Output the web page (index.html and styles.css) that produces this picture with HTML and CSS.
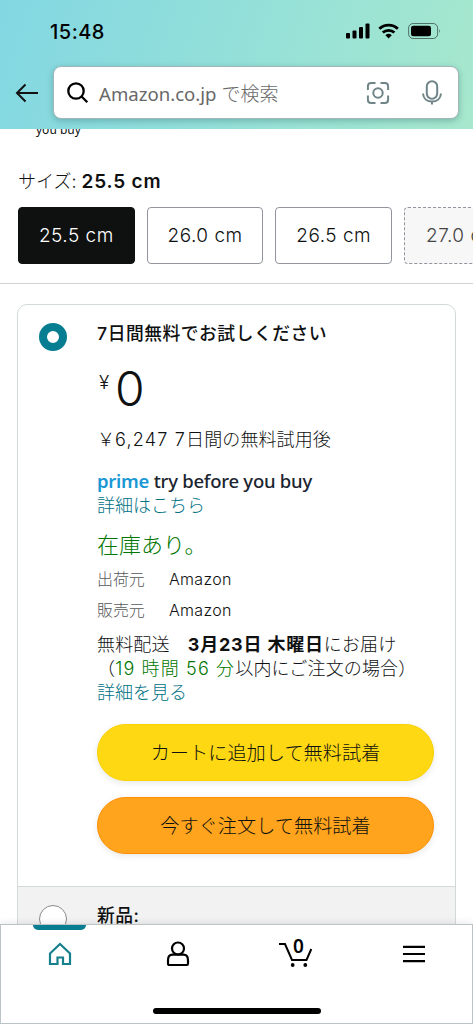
FILE: index.html
```html
<!DOCTYPE html>
<html lang="ja">
<head>
<meta charset="utf-8">
<title>Amazon.co.jp</title>
<link rel="stylesheet" href="styles.css">
</head>
<body>
<div class="screen">
  <header class="header">
    <div class="status">
      <span class="time">15:48</span>
      <svg class="status-icons" width="96" height="18" viewBox="0 0 96 18">
        <rect x="1" y="11" width="4" height="5.500" rx="1"/><rect x="7.500" y="8.500" width="4" height="8" rx="1"/><rect x="14" y="5" width="4" height="11.500" rx="1"/><rect x="20.500" y="1.500" width="4" height="15" rx="1"/>
        <g fill="none" stroke="#000" stroke-width="2.700"><path d="M34.300 6.800a13.500 13.500 0 0 1 18.600 0M37.800 10.600a8.500 8.500 0 0 1 11.600 0"/></g>
        <path d="M40.400 13.200a5 5 0 0 1 6.400 0l-3.200 3.300z"/>
        <rect x="63.600" y="1.500" width="29" height="15" rx="4.500" fill="none" stroke="#000" stroke-opacity=".5"/>
        <rect x="66" y="3.700" width="20" height="10.600" rx="2.300"/><path d="M94.300 7q1.600 2 0 4z" opacity=".6"/>
      </svg>
    </div>
    <div class="search-row">
      <svg class="back" width="24" height="20" viewBox="0 0 24 20" fill="none" stroke="#111" stroke-width="2"><path d="M23 10H2M10.500 1.500 2 10l8.500 8.500"/></svg>
      <div class="search">
        <svg class="lens" width="22" height="22" viewBox="0 0 22 22" fill="none" stroke="#000" stroke-width="2.300"><circle cx="9" cy="9" r="7.700"/><path d="m14.300 14.300 6 6"/></svg>
        <span class="placeholder">Amazon.co.jp <span class="kana">で検索</span></span>
        <svg class="scan" width="24" height="24" viewBox="0 0 24 24" fill="none" stroke="#6f8587" stroke-width="2"><path d="M9.500 1.900H5.200Q1.900 1.900 1.900 5.200V9M14.500 1.900h4.300q3.300 0 3.300 3.300V9M1.900 14.500v4.300q0 3.300 3.300 3.300h4.300M22.100 14.500v4.300q0 3.300-3.300 3.300h-4.300"/><circle cx="12" cy="12" r="4.700"/></svg>
        <svg class="mic" width="20" height="25" viewBox="0 0 20 25" fill="none" stroke="#6f8587" stroke-width="2"><rect x="4.800" y="1.300" width="10.400" height="17.400" rx="5.200"/><path d="M1 13.500c.4 5 4 8 9 8s8.600-3 9-8M10 21.500v3"/></svg>
      </div>
    </div>
  </header>

  <main class="content">
    <div class="clipped">you buy</div>
    <section class="sizes">
      <h2 class="size-label">サイズ: <b>25.5 cm</b></h2>
      <div class="chips">
        <div class="chip selected">25.5 cm</div>
        <div class="chip">26.0 cm</div>
        <div class="chip">26.5 cm</div>
        <div class="chip unavailable">27.0 cm</div>
      </div>
    </section>
    <section class="card">
      <div class="offer">
        <span class="radio on"></span>
        <div class="details">
          <h3 class="title">7日間無料でお試しください</h3>
          <div class="price"><span class="yen">¥</span><span class="zero">0</span></div>
          <p class="after"><span class="yen-wide">￥</span><span class="amount">6,247 7</span>日間の無料試用後</p>
          <p class="tbyb"><b>prime</b> try before you buy</p>
          <p class="link">詳細はこちら</p>
          <p class="stock">在庫あり。</p>
          <dl class="facts">
            <dt>出荷元</dt><dd>Amazon</dd>
            <dt>販売元</dt><dd>Amazon</dd>
          </dl>
          <p class="delivery">無料配送　<b>3月23日 木曜日</b>にお届け</p>
          <p class="delivery countdown">（<span class="green">19 時間 56 分</span>以内にご注文の場合）</p>
          <p class="link">詳細を見る</p>
          <div class="btn cart">カートに追加して無料試着</div>
          <div class="btn buy">今すぐ注文して無料試着</div>
        </div>
      </div>
      <div class="offer fresh">
        <span class="radio"></span>
        <h3 class="title">新品:</h3>
      </div>
    </section>
  </main>

  <nav class="tabs">
    <div class="tab active"><svg width="24" height="24" viewBox="0 0 24 24" fill="none" stroke="#16808f" stroke-width="2.200"><path d="M2 11.500 12 2l10 9.500V22h-7v-6.500H9.500V22H2z"/></svg></div>
    <div class="tab"><svg width="24" height="26" viewBox="0 0 24 26" fill="none" stroke="#000" stroke-width="2.200"><circle cx="12" cy="7.500" r="6"/><path d="M6.500 13.700h11c3 0 4.500 2.500 4.500 5.500v3.500q0 1.300-1.300 1.300H3.300Q2 24 2 22.700v-3.500c0-3 1.500-5.500 4.500-5.500z"/></svg></div>
    <div class="tab"><div class="cart-icon"><svg width="34" height="28" viewBox="0 0 34 28" fill="none" stroke="#000" stroke-width="2"><path d="M0 4h6l7 16h14.500l4.800-11"/><circle cx="13.700" cy="25" r="1.900" fill="#000" stroke="none"/><circle cx="26.300" cy="25" r="1.900" fill="#000" stroke="none"/></svg><span class="count">0</span></div></div>
    <div class="tab"><svg width="22" height="18" viewBox="0 0 22 18" stroke="#000" stroke-width="2.200"><path d="M0 1.800h22M0 9h22M0 16.200h22"/></svg></div>
    <div class="home-bar"></div>
  </nav>
</div>
</body>
</html>
```
FILE: styles.css
```css
* { box-sizing: border-box; }
body { margin: 0; background: #fff; color: #0f1111; font-family: "Inter", "Noto Sans CJK JP", sans-serif; font-weight: 300; }
h2, h3, p, dl, dd { margin: 0; font-weight: 300; }
svg { display: block; flex: none; }
.screen { width: 473px; height: 1024px; display: flex; flex-direction: column; overflow: hidden; }

.header { flex: none; height: 129px; background: linear-gradient(108deg, #82d7e2 0%, #94e0d9 50%, #a7e8cd 100%); }
.status { height: 66px; padding: 22px 32px 0 50px; display: flex; justify-content: space-between; }
.time { font-size: 20px; line-height: 20px; font-weight: 500; letter-spacing: .5px; color: #000; }
.status-icons { width: 96px; }
.search-row { display: flex; align-items: center; padding: 0 14px 0 15px; gap: 14px; }
.search { flex: 1; height: 53px; display: flex; align-items: center; padding: 0 16px 0 13px; background: #fff; border: 1px solid #a2b5b9; border-radius: 8px; box-shadow: 0 2px 6px rgba(40, 100, 100, .35); }
.back, .lens { margin-top: 1px; }
.placeholder { flex: 1; padding: 2px 0 0 10px; font: 400 18.600px/26px "Noto Sans", "Noto Sans CJK JP", sans-serif; color: #686868; white-space: nowrap; }
.kana { font: 300 19px/26px "Noto Sans CJK JP", sans-serif; }
.mic { margin-left: 32px; }

.content { flex: 1; min-height: 0; overflow: hidden; }
.clipped { height: 9px; padding-left: 36px; font: 400 12px/16px "Noto Sans", sans-serif; display: flex; align-items: flex-end; overflow: hidden; }
.sizes { height: 146px; padding: 29px 0 0 18px; border-bottom: 1px solid #d0d3d5; overflow: hidden; }
.size-label { height: 30px; font-size: 18px; line-height: 30px; white-space: nowrap; }
.size-label b { font-size: 19px; font-weight: 600; letter-spacing: .8px; }
.chips { display: flex; gap: 12px; margin-top: 10px; }
.chip { flex: none; width: 116.700px; height: 57px; border: 1px solid #92959d; border-radius: 4px; font-size: 19px; line-height: 55px; text-align: center; letter-spacing: .5px; }
.chip.selected { background: #0f1111; border-color: #0f1111; color: #fff; }
.chip.unavailable { padding-left: 21px; text-align: left; background: #f7f7f7; border-style: dashed; color: #444; }

.card { width: 439px; height: 680px; margin: 20px 0 0 17px; border: 1px solid #d3d9d9; border-radius: 10px; }
.offer { display: flex; align-items: flex-start; height: 581px; padding: 18px 21px 0; }
.radio { flex: none; width: 28px; height: 28px; margin-right: 30px; border: 1px solid #888c8c; border-radius: 50%; background: #fff; }
.radio.on { border: 8.500px solid #077d91; }
.details { width: 338px; }
.title { height: 26px; margin-top: -2px; font-size: 17.800px; line-height: 26px; font-weight: 500; letter-spacing: .5px; }
.price { height: 64px; margin-top: 13px; display: flex; align-items: flex-start; }
.yen { width: 18px; padding-left: 2px; font-size: 19px; line-height: 46px; }
.zero { font-size: 48px; line-height: 58px; }
.after { height: 26px; margin-top: 3px; font-size: 18px; line-height: 26px; letter-spacing: .1px; white-space: nowrap; }
.amount { letter-spacing: 1.200px; }
.tbyb { height: 26px; margin-top: 15px; font: 500 18.500px/26px "Noto Sans", sans-serif; color: #1b2530; white-space: nowrap; letter-spacing: -.25px; }
.tbyb b { color: #1a98d5; font-weight: 600; }
.link { height: 24px; font-size: 18px; line-height: 24px; color: #007185; }
.stock { height: 32px; margin-top: 11px; font-size: 22px; line-height: 32px; color: #007600; }
.facts { display: grid; grid-template-columns: 72px 1fr; grid-auto-rows: 31px; margin-top: 3px; font-size: 16px; line-height: 31px; letter-spacing: .1px; }
.facts dt { color: #565959; letter-spacing: -.1px; }
.facts dd { letter-spacing: .3px; }
.delivery { height: 25px; font-size: 18px; line-height: 25px; letter-spacing: .15px; white-space: nowrap; }
.facts + .delivery { margin-top: 6px; }
.countdown { height: 24px; line-height: 24px; }
.delivery b { font-weight: 700; letter-spacing: .8px; }
.green { color: #007600; letter-spacing: 1.150px; }
.btn { height: 57px; border: 1px solid #fcd200; border-radius: 29px; background: #ffd814; font-size: 19.200px; line-height: 56px; text-align: center; box-shadow: 0 2px 6px rgba(213, 217, 217, .6); }
.cart { margin-top: 19px; }
.buy { margin-top: 16px; background: #ffa41c; border-color: #ff8f00; }
.fresh { height: 98px; background: #f2f2f2; border-top: 1px solid #d3d9d9; }

.tabs { position: relative; z-index: 1; flex: none; height: 100px; display: grid; grid-template-columns: repeat(4, 118px); border: 1px solid #bdc4c8; background: #fff; box-shadow: 0 -2px 6px rgba(0, 0, 0, .08); }
.tab { height: 58px; display: flex; align-items: center; justify-content: center; }
.tab.active { position: relative; }
.tab.active::before { content: ""; position: absolute; left: 32px; top: 0; width: 53px; height: 5px; background: #077d91; border-radius: 0 0 5px 5px; }
.cart-icon { position: relative; }
.count { position: absolute; left: 14px; top: -6px; font: 600 19px/24px "Noto Sans", sans-serif; color: #000; }
.home-bar { position: absolute; left: 152px; top: 83px; width: 168px; height: 6px; border-radius: 3px; background: #000; }
```
